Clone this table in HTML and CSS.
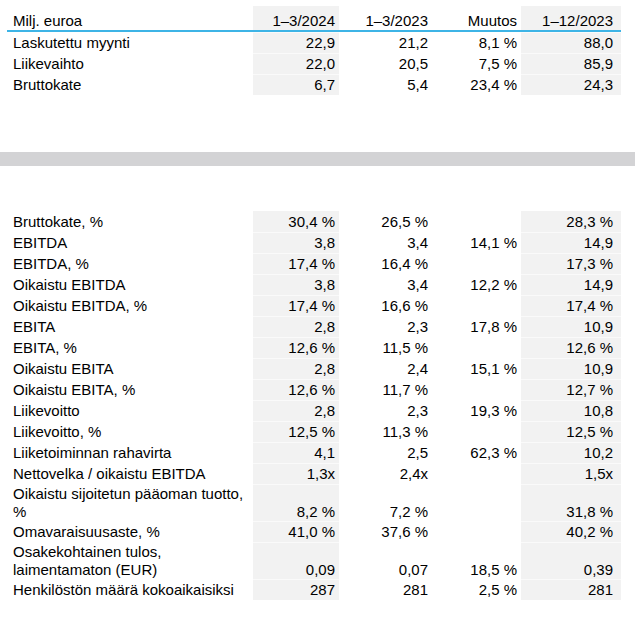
FILE: index.html
```html
<!DOCTYPE html>
<html lang="fi">
<head>
<meta charset="utf-8">
<title>Avainluvut</title>
<link rel="stylesheet" href="styles.css">
</head>
<body>
<div class="page">
  <table class="fin top">
    <colgroup>
      <col class="c-label"><col class="c-1"><col class="c-2"><col class="c-3"><col class="c-4">
    </colgroup>
    <thead>
      <tr class="head">
        <th class="label">Milj. euroa</th>
        <th class="v g">1–3/2024</th>
        <th class="v">1–3/2023</th>
        <th class="v">Muutos</th>
        <th class="v g last">1–12/2023</th>
      </tr>
    </thead>
    <tbody>
      <tr><td class="label">Laskutettu myynti</td><td class="v g">22,9</td><td class="v">21,2</td><td class="v">8,1 %</td><td class="v g last">88,0</td></tr>
      <tr><td class="label">Liikevaihto</td><td class="v g">22,0</td><td class="v">20,5</td><td class="v">7,5 %</td><td class="v g last">85,9</td></tr>
      <tr><td class="label">Bruttokate</td><td class="v g">6,7</td><td class="v">5,4</td><td class="v">23,4 %</td><td class="v g last">24,3</td></tr>
    </tbody>
  </table>

  <div class="band"></div>

  <table class="fin bottom">
    <colgroup>
      <col class="c-label"><col class="c-1"><col class="c-2"><col class="c-3"><col class="c-4">
    </colgroup>
    <tbody>
      <tr class="first"><td class="label">Bruttokate, %</td><td class="v g">30,4 %</td><td class="v">26,5 %</td><td class="v"></td><td class="v g last">28,3 %</td></tr>
      <tr><td class="label">EBITDA</td><td class="v g">3,8</td><td class="v">3,4</td><td class="v">14,1 %</td><td class="v g last">14,9</td></tr>
      <tr><td class="label">EBITDA, %</td><td class="v g">17,4 %</td><td class="v">16,4 %</td><td class="v"></td><td class="v g last">17,3 %</td></tr>
      <tr><td class="label">Oikaistu EBITDA</td><td class="v g">3,8</td><td class="v">3,4</td><td class="v">12,2 %</td><td class="v g last">14,9</td></tr>
      <tr><td class="label">Oikaistu EBITDA, %</td><td class="v g">17,4 %</td><td class="v">16,6 %</td><td class="v"></td><td class="v g last">17,4 %</td></tr>
      <tr><td class="label">EBITA</td><td class="v g">2,8</td><td class="v">2,3</td><td class="v">17,8 %</td><td class="v g last">10,9</td></tr>
      <tr><td class="label">EBITA, %</td><td class="v g">12,6 %</td><td class="v">11,5 %</td><td class="v"></td><td class="v g last">12,6 %</td></tr>
      <tr><td class="label">Oikaistu EBITA</td><td class="v g">2,8</td><td class="v">2,4</td><td class="v">15,1 %</td><td class="v g last">10,9</td></tr>
      <tr><td class="label">Oikaistu EBITA, %</td><td class="v g">12,6 %</td><td class="v">11,7 %</td><td class="v"></td><td class="v g last">12,7 %</td></tr>
      <tr><td class="label">Liikevoitto</td><td class="v g">2,8</td><td class="v">2,3</td><td class="v">19,3 %</td><td class="v g last">10,8</td></tr>
      <tr><td class="label">Liikevoitto, %</td><td class="v g">12,5 %</td><td class="v">11,3 %</td><td class="v"></td><td class="v g last">12,5 %</td></tr>
      <tr><td class="label">Liiketoiminnan rahavirta</td><td class="v g">4,1</td><td class="v">2,5</td><td class="v">62,3 %</td><td class="v g last">10,2</td></tr>
      <tr><td class="label">Nettovelka / oikaistu EBITDA</td><td class="v g">1,3x</td><td class="v">2,4x</td><td class="v"></td><td class="v g last">1,5x</td></tr>
      <tr class="double"><td class="label">Oikaistu sijoitetun pääoman tuotto, %</td><td class="v g">8,2 %</td><td class="v">7,2 %</td><td class="v"></td><td class="v g last">31,8 %</td></tr>
      <tr><td class="label">Omavaraisuusaste, %</td><td class="v g">41,0 %</td><td class="v">37,6 %</td><td class="v"></td><td class="v g last">40,2 %</td></tr>
      <tr class="double"><td class="label">Osakekohtainen tulos, laimentamaton (EUR)</td><td class="v g">0,09</td><td class="v">0,07</td><td class="v">18,5 %</td><td class="v g last">0,39</td></tr>
      <tr><td class="label">Henkilöstön määrä kokoaikaisiksi</td><td class="v g">287</td><td class="v">281</td><td class="v">2,5 %</td><td class="v g last">281</td></tr>
    </tbody>
  </table>
</div>
</body>
</html>
```

FILE: styles.css
```css
html, body {
  margin: 0;
  padding: 0;
  background: #ffffff;
}

body {
  font-family: "Liberation Sans", Arial, sans-serif;
  font-size: 15px;
  color: #000000;
}

.page {
  padding-top: 6px;
}

.fin {
  border-collapse: separate;
  border-spacing: 0;
  table-layout: fixed;
  width: 614px;
  margin-left: 7px;
}

.c-label { width: 246px; }
.c-1 { width: 86px; }
.c-2 { width: 93px; }
.c-3 { width: 89px; }
.c-4 { width: 100px; }

.fin th,
.fin td {
  font-weight: normal;
  line-height: 18px;
  padding: 0 4px 0 0;
  white-space: nowrap;
  text-align: right;
}

.fin .label {
  text-align: left;
  padding-left: 6px;
  padding-right: 2px;
  white-space: normal;
}

.fin .last {
  padding-right: 8px;
}

.fin .g {
  background: #f2f2f2;
}

/* header row */
.fin .head th {
  height: 24px;
  vertical-align: bottom;
  border-bottom: 2px solid #3db4e6;
}

/* body rows */
.fin td {
  height: 20px;
  vertical-align: middle;
  border-top: 1px solid #fafafa;
}

.fin td:not(.g) {
  border-top-color: #ffffff;
}

.bottom tr.first td {
  border-top: 0;
  height: 21px;
}

.bottom tr.double td {
  height: 36px;
  vertical-align: bottom;
}

.bottom tr.double td.label {
  vertical-align: top;
}

.band {
  margin-top: 57px;
  height: 14px;
  background: #d3d3d5;
}

.bottom {
  margin-top: 45px;
}
```
